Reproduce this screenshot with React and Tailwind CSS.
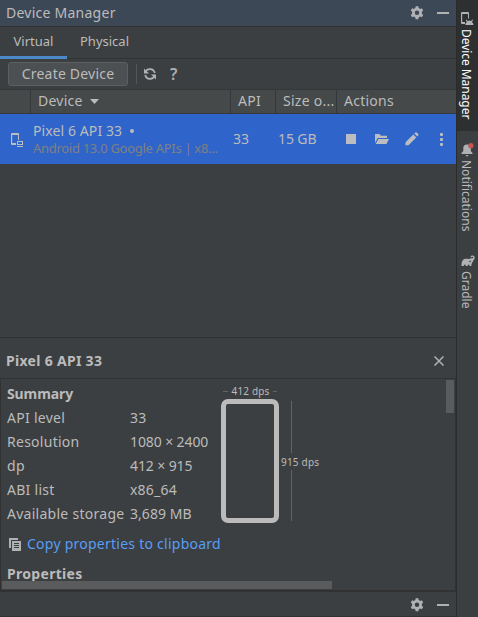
import React from "react";

const Gear = () => (
  <svg className="block size-4 shrink-0" viewBox="0 0 16 16" fill="#afb1b3">
    <path
      fillRule="evenodd"
      d="M6.300 3 6.700 1.200h2.600L9.700 3l1.500.9 1.700-.6 1.300 2.300-1.300 1.200v1.900L14.200 9.900l-1.300 2.300-1.700-.6-1.500.9-.4 1.800H6.700l-.4-1.800-1.500-.9-1.700.6-1.300-2.300 1.300-1.200V6.800L1.800 5.600l1.300-2.300 1.700.6zM8 5.500a2.250 2.250 0 1 0 0 4.500 2.250 2.250 0 0 0 0-4.500z"
    />
  </svg>
);

const WindowControls = () => (
  <div className="ml-auto flex items-center gap-[12px] pr-[7px]">
    <Gear />
    <div className="h-[2px] w-[12px] bg-[#afb1b3]" />
  </div>
);

const DeviceIcon = () => (
  <svg className="block size-4" viewBox="0 0 16 16" fill="#bbbdc0">
    <path fillRule="evenodd" d="M3 1h6q1 0 1 1v6H9V3H3.200v8H7v2H3q-1 0-1-1V2q0-1 1-1z" />
    <path fillRule="evenodd" d="M8 9h6v4H8zM9 10v2h4v-2zM8 14h6v1H8z" />
  </svg>
);

const AndroidPhoneIcon = () => (
  <svg className="block h-[14px] w-[13px]" viewBox="0 0 13 14" fill="#afb1b3">
    <path fillRule="evenodd" d="M1 0h6q1 0 1 1v5.500H7V2H1.200v8H4v2H1q-1 0-1-1V1q0-1 1-1z" />
    <path d="M4.300 13a4 4 0 0 1 1.600-3L4.700 8l.7-.4L6.700 9a4.200 4.200 0 0 1 3.400 0l1.300-1.400.7.4-1.200 2a4 4 0 0 1 1.600 3z" />
  </svg>
);

const BellIcon = () => (
  <svg className="block h-[14px] w-[13px]" viewBox="0 0 13 14">
    <path
      fill="#afb1b3"
      d="M6 1.500a3.700 3.700 0 0 0-3.700 3.700V8L.5 10v1h11v-1L9.800 8V5.200A3.700 3.700 0 0 0 6 1.500zM4.400 12h3.200L6 13.700z"
    />
    <circle cx="9.900" cy="2.700" r="2.600" fill="#c75450" />
  </svg>
);

const GradleIcon = () => (
  <svg className="block h-[12px] w-[14px]" viewBox="0 0 14 12">
    <path
      fill="#afb1b3"
      d="M.5 11C.3 7.600 1.200 4.900 3.400 4.100c1.700-.6 3.100.2 4.500-.1 1.200-.3 2-.9 3.200-.6.900.1 1.400-.9.900-1.400-.7-.5-1.400.1-1.700.5l-.8-.7C10.100.5 12 .2 13 1.100c1.200 1.200.7 3-.4 4.200-.9 1.100-1.300 2.100-1.900 3.400-.2.500-.4 1.400-.4 2.300H8.500V10c-.5-.7-1.300-.7-1.800 0v1H4.700V10c-.5-.7-1.300-.7-1.800 0v1z"
    />
    <path d="M7.800 6.200 9.400 7l.2-1.500" fill="none" stroke="#3c3f41" strokeWidth=".7" />
  </svg>
);

const StopIcon = () => <div className="size-[10px] bg-[#bbbdc0]" />;

const FolderIcon = () => (
  <svg className="block h-[10px] w-[14px]" viewBox="0 0 14 10" fill="#bbbdc0">
    <path d="M0 0h4.500L6 1.700h6V4H2.700L0 9z" />
    <path d="M3.400 5H14l-2.500 5H.7z" />
  </svg>
);

const PencilIcon = () => (
  <svg className="block size-[14px]" viewBox="0 0 14 14" fill="#bbbdc0">
    <path d="M.5 10.300 8.300 2.500l3 3L3.500 13.300h-3zM9.200 1.600 10.500.4q.6-.5 1.200 0L13.300 2q.5.600 0 1.200L12.200 4.500z" />
  </svg>
);

const MoreIcon = () => (
  <div className="flex w-[3px] flex-col gap-[2px]">
    <div className="size-[3px] rounded-[1px] bg-[#bbbdc0]" />
    <div className="size-[3px] rounded-[1px] bg-[#bbbdc0]" />
    <div className="size-[3px] rounded-[1px] bg-[#bbbdc0]" />
  </div>
);

const RefreshIcon = () => (
  <svg className="block size-[14px]" viewBox="0 0 14 14" fill="none" stroke="#afb1b3" strokeWidth="1.700">
    <path d="M2.200 5.500A5 5 0 0 1 11.800 6M11.800 8.500A5 5 0 0 1 2.200 8" />
    <path d="M1 1.500v5h5zM13 12.500v-5H8z" fill="#afb1b3" stroke="none" />
  </svg>
);

const CopyIcon = () => (
  <svg className="block size-[13px] shrink-0" viewBox="0 0 13 13">
    <path d="M0 0h9v2H2v8H0z" fill="#afb1b3" />
    <path d="M3 3h9v10H3z" fill="#afb1b3" />
    <path d="M5 5.500h5M5 7.500h5M5 9.500h5" stroke="#3c3f41" />
  </svg>
);

const summary = [
  ["API level", "33", "tracking-[0.2px]"],
  ["Resolution", "1080 × 2400", "tracking-[-0.1px]"],
  ["dp", "412 × 915", "tracking-[-0.1px]"],
  ["ABI list", "x86_64", "tracking-[0.2px]"],
  ["Available storage", "3,689 MB", "tracking-[0.05px]"],
];

export default function App() {
  return (
    <div className="flex h-[617px] w-[478px] overflow-hidden bg-[#3c3f41] font-['Noto_Sans',sans-serif] text-[14px] whitespace-nowrap text-[#bbbbbb]">
      <main className="flex w-[456px] flex-col">
        <header className="flex h-[27px] items-center border-b border-[#323232] bg-[#3d4856] pl-[6px]">
          <span className="pb-[2px] tracking-[0.25px]">Device Manager</span>
          <WindowControls />
        </header>

        <nav className="flex h-[32px] border-b border-[#323232] text-[13px]">
          <div className="-mb-px flex h-[32px] w-[67px] items-center justify-center border-b-3 border-[#4a88c7]">Virtual</div>
          <div className="flex h-[29px] w-[75px] items-center justify-center">Physical</div>
        </nav>

        <div className="flex h-[30px] items-center pl-[8px]">
          <button className="h-[24px] w-[120px] rounded-[3px] border border-[#5e6060] bg-[#4c5052] pb-[2px] tracking-[0.2px]">Create Device</button>
          <div className="ml-[8px] h-[20px] w-px bg-[#555555]" />
          <div className="ml-[6px]"><RefreshIcon /></div>
          <span className="ml-[13px] text-[16px] font-semibold text-[#afb1b3]">?</span>
        </div>

        <div className="grid h-[25px] grid-cols-[31px_200px_45px_61px_119px] border-y border-[#35383a] bg-[#45494a] tracking-[0.25px]">
          <div className="border-r border-[#35383a]" />
          <div className="flex items-center gap-[7px] border-r border-[#35383a] pl-[7px]">
            <span className="pb-[2px]">Device</span>
            <svg className="block h-[5px] w-[9px]" viewBox="0 0 9 5"><path d="M0 0h9L4.500 5z" fill="#bbbbbb" /></svg>
          </div>
          <div className="flex items-center border-r border-[#35383a] pb-[2px] pl-[7px]">API</div>
          <div className="flex items-center border-r border-[#35383a] pb-[2px] pl-[7px]">Size o...</div>
          <div className="flex items-center pb-[2px] pl-[7px]">Actions</div>
        </div>

        <div className="grid h-[50px] grid-cols-[33px_200px_45px_61px_117px] items-center bg-[#2f65ca]">
          <div className="pt-[2px] pl-[9px]"><DeviceIcon /></div>
          <div className="pt-[1px] leading-[18px]">
            <div className="flex h-[18px] items-center gap-[8px]">
              <span className="tracking-[0.1px]">Pixel 6 API 33</span>
              <span className="size-[4px] rounded-full bg-[#bbbbbb]" />
            </div>
            <div className="h-[17px] text-[13px] leading-[17px] tracking-[-0.29px] text-[#808080]">Android 13.0 Google APIs | x8...</div>
          </div>
          <div className="pb-[2px]">33</div>
          <div className="pb-[2px] tracking-[-0.1px]">15 GB</div>
          <div className="flex items-center pl-[7px]">
            <StopIcon />
            <div className="ml-[19px]"><FolderIcon /></div>
            <div className="ml-[16px]"><PencilIcon /></div>
            <div className="ml-[20px] pl-px"><MoreIcon /></div>
          </div>
        </div>

        <div className="h-[173px]" />

        <section className="flex h-[255px] flex-col border-t border-[#323232]">
          <div className="flex h-[40px] items-center justify-between pt-[6px] pr-[12px] pl-[6px] font-bold">
            <span className="pb-[2px] tracking-[0.3px]">Pixel 6 API 33</span>
            <svg className="block size-[10px]" viewBox="0 0 10 10" stroke="#afb1b3" strokeWidth="1.500"><path d="m.5.5 9 9M9.500.5l-9 9" /></svg>
          </div>
          <div className="flex h-[214px] justify-between border-t border-r border-b-2 border-l border-[#323232]">
            <div className="flex w-full flex-col">
              <div className="flex h-[202px] pl-[6px]">
                <div className="w-[214px] pt-[3px]">
                  <div className="h-[24px] leading-[24px] font-bold tracking-[-0.1px]">Summary</div>
                  {summary.map(([label, value, valueClass]) => (
                    <div key={label} className="grid h-[24px] grid-cols-[123px_1fr] leading-[24px]">
                      <span className="tracking-[0.27px]">{label}</span>
                      <span className={valueClass}>{value}</span>
                    </div>
                  ))}
                  <div className="mt-[6px] flex h-[24px] items-center gap-[5px] pl-[2px] text-[#589df6]">
                    <CopyIcon />
                    <span className="pb-[2px] tracking-[0.25px]">Copy properties to clipboard</span>
                  </div>
                  <div className="mt-[6px] h-[20px] leading-[24px] font-bold tracking-[0.3px]">Properties</div>
                </div>
                <div className="w-[58px] pt-[5px]">
                  <div className="flex h-[15px] items-center justify-between px-[2px] text-[10px] tracking-[0.15px]">
                    <div className="h-px w-[5px] bg-[#646464]" />
                    <span>412 dps</span>
                    <div className="h-px w-[4px] bg-[#646464]" />
                  </div>
                  <div className="h-[124px] w-[58px] rounded-[7px] border-5 border-[#bbbbbb]" />
                </div>
                <div className="ml-[2px] flex h-[142px] flex-col pt-[22px] text-[10px] tracking-[0.2px]">
                  <div className="ml-[10px] h-[52px] w-px bg-[#646464]" />
                  <div className="h-[17px] leading-[18px]">915 dps</div>
                  <div className="ml-[10px] h-[51px] w-px bg-[#646464]" />
                </div>
              </div>
              <div className="relative ml-[1px] h-[8px] w-[330px] bg-[#595b5c]" />
            </div>
            <div className="mt-[1px] mr-[1px] h-[33px] w-[8px] shrink-0 bg-[#595b5c]" />
          </div>
        </section>

        <footer className="flex h-[25px] items-center border-b border-[#323232] pt-[2px]">
          <WindowControls />
        </footer>
      </main>

      <aside className="flex w-[22px] flex-col border-l border-[#2b2b2b] text-[12px]">
        <div className="flex h-[131px] flex-col items-center bg-[#2d2f30] pt-[12px] text-white">
          <AndroidPhoneIcon />
          <span className="mt-[3px] mr-[3px] leading-[18px] tracking-[-0.05px] [writing-mode:vertical-rl]">Device Manager</span>
        </div>
        <div className="flex h-[110px] flex-col items-center pt-[12px]">
          <BellIcon />
          <span className="mt-[3px] mr-[3px] leading-[18px] [writing-mode:vertical-rl]">Notifications</span>
        </div>
        <div className="flex flex-col items-center pt-[14px]">
          <GradleIcon />
          <span className="mt-[4px] mr-[3px] leading-[18px] [writing-mode:vertical-rl]">Gradle</span>
        </div>
      </aside>
    </div>
  );
}
